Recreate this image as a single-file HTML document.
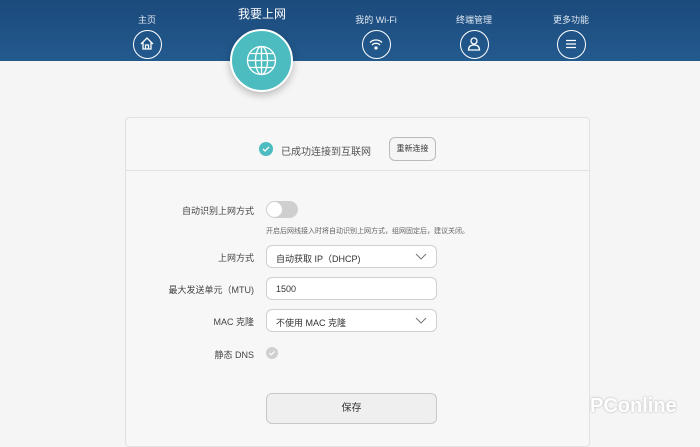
<!DOCTYPE html>
<html><head><meta charset="utf-8"><style>
*{margin:0;padding:0;box-sizing:border-box}
body{width:700px;height:434px;overflow:hidden;background:#f5f5f5;font-family:"Liberation Sans","Noto Sans CJK SC",sans-serif;position:relative;color:#333}
.hdr{position:absolute;left:0;top:0;width:700px;height:61px;background:linear-gradient(#1c4a7c,#235a8e)}
.nl{position:absolute;color:#dfe8f2;font-size:9px;text-align:center;width:80px}
.ic{position:absolute;width:29px;height:29px;border:1.5px solid #fff;border-radius:50%}
.ic svg{position:absolute;left:0;top:0}
.big{position:absolute;left:230px;top:29px;width:63px;height:63px;border-radius:50%;background:#4dbcc0;border:2px solid #fff;box-shadow:0 3px 8px rgba(0,0,0,.25)}
.card{position:absolute;left:125px;top:117px;width:465px;height:330px;border:1px solid #e2e2e2;border-radius:4px;background:#f7f7f7}
.div{position:absolute;left:125px;top:170px;width:465px;height:1px;background:#e2e2e2}
.lbl{position:absolute;right:446px;font-size:9px;color:#444;white-space:nowrap}
.inp{position:absolute;left:266px;width:171px;height:23px;border:1px solid #cfcfcf;border-radius:6px;background:#fff;font-size:9px;padding:6px 0 0 9px;color:#333}
.chev{position:absolute;right:9px;top:6px}
</style></head><body>
<div class="hdr"></div>
<div class="nl" style="left:107px;top:13px">主页</div>
<div class="nl" style="left:222px;top:5px;font-size:12px;color:#fff">我要上网</div>
<div class="nl" style="left:336px;top:13px">我的 Wi-Fi</div>
<div class="nl" style="left:434px;top:13px">终端管理</div>
<div class="nl" style="left:531px;top:13px">更多功能</div>
<div class="ic" style="left:133px;top:30px"><svg width="26" height="26" viewBox="0 0 26 26" fill="none" stroke="#fff" stroke-width="1.3"><path d="M7 13l6-6 6 6M9 11v7h8v-7M11.5 18v-4h3v4"/></svg></div>
<div class="ic" style="left:362px;top:30px"><svg width="26" height="26" viewBox="0 0 26 26" fill="none" stroke="#fff" stroke-width="1.3"><path d="M7 11.5a8.5 8.5 0 0 1 12 0M9 14a5.5 5.5 0 0 1 8 0"/><circle cx="13" cy="17" r="1" fill="#fff"/></svg></div>
<div class="ic" style="left:460px;top:30px"><svg width="26" height="26" viewBox="0 0 26 26" fill="none" stroke="#fff" stroke-width="1.3"><circle cx="13" cy="10" r="3"/><path d="M7.5 19q0-5 5.5-5t5.5 5z"/></svg></div>
<div class="ic" style="left:557px;top:30px"><svg width="26" height="26" viewBox="0 0 26 26" fill="none" stroke="#fff" stroke-width="1.3"><path d="M8 9.5h10M8 13h10M8 16.5h10"/></svg></div>
<div class="big"><svg width="59" height="59" viewBox="0 0 59 59" fill="none" stroke="#fff" stroke-width="1.3"><circle cx="29.5" cy="29.5" r="14"/><ellipse cx="29.5" cy="29.5" rx="6" ry="14"/><path d="M29.5 15.5v28M15.5 29.5h28M17.5 22.5h24M17.5 36.5h24"/></svg></div>
<div class="card"></div>
<div class="div"></div>
<svg style="position:absolute;left:259px;top:142px" width="14" height="14" viewBox="0 0 14 14"><circle cx="7" cy="7" r="7" fill="#4dbcc0"/><path d="M4 7l2 2 4-4" stroke="#fff" stroke-width="1.3" fill="none"/></svg>
<div style="position:absolute;left:281px;top:143px;font-size:10px;color:#555">已成功连接到互联网</div>
<div style="position:absolute;left:389px;top:137px;width:47px;height:24px;border:1px solid #bbb;border-radius:6px;background:#f5f5f5;font-size:8px;text-align:center;line-height:22px">重新连接</div>
<div class="lbl" style="top:204px">自动识别上网方式</div>
<div style="position:absolute;left:266px;top:201px;width:32px;height:17px;border-radius:9px;background:#cfcfcf"><div style="position:absolute;left:1px;top:1px;width:15px;height:15px;border-radius:50%;background:#fff"></div></div>
<div style="position:absolute;left:266px;top:226px;font-size:7px;color:#666;white-space:nowrap">开启后网线接入时将自动识别上网方式，组网固定后，建议关闭。</div>
<div class="lbl" style="top:251px">上网方式</div>
<div class="inp" style="top:245px">自动获取 IP（DHCP)<svg class="chev" width="12" height="9" viewBox="0 0 12 9"><path d="M1 2l5 5 5-5" stroke="#777" fill="none"/></svg></div>
<div class="lbl" style="top:283px">最大发送单元（MTU)</div>
<div class="inp" style="top:277px">1500</div>
<div class="lbl" style="top:315px">MAC 克隆</div>
<div class="inp" style="top:309px">不使用 MAC 克隆<svg class="chev" width="12" height="9" viewBox="0 0 12 9"><path d="M1 2l5 5 5-5" stroke="#777" fill="none"/></svg></div>
<div class="lbl" style="top:348px">静态 DNS</div>
<svg style="position:absolute;left:266px;top:347px" width="12" height="12" viewBox="0 0 12 12"><circle cx="6" cy="6" r="6" fill="#d0d0d0"/><path d="M3.3 6l1.8 1.8 3.5-3.5" stroke="#fff" stroke-width="1.2" fill="none"/></svg>
<div style="position:absolute;left:266px;top:393px;width:171px;height:31px;border:1px solid #c8c8c8;border-radius:6px;background:#efefef;font-size:10px;text-align:center;line-height:29px">保存</div>
<div style="position:absolute;left:590px;top:395px;font-size:20px;color:#fff;font-weight:bold;text-shadow:0 0 2px #aaa">PConline</div>
</body></html>
